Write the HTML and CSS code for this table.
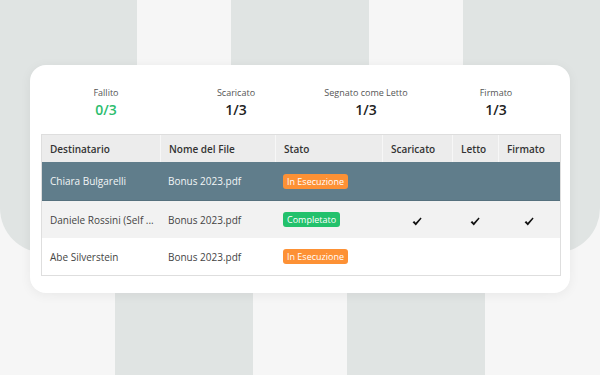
FILE: index.html
```html
<!DOCTYPE html>
<html lang="it">
<head>
<meta charset="utf-8">
<title>Stato documento</title>
<link rel="stylesheet" href="styles.css">
</head>
<body>
<div class="backdrop" aria-hidden="true">
  <div class="col col-top col-a"></div>
  <div class="col col-top col-b"></div>
  <div class="col col-top col-c"></div>
  <div class="col col-bottom col-d"></div>
  <div class="col col-bottom col-e"></div>
</div>
<main class="card">
  <section class="stats">
    <div class="stat"><div class="stat-label">Fallito</div><div class="stat-value ok">0/3</div></div>
    <div class="stat"><div class="stat-label">Scaricato</div><div class="stat-value">1/3</div></div>
    <div class="stat"><div class="stat-label">Segnato come Letto</div><div class="stat-value">1/3</div></div>
    <div class="stat"><div class="stat-label">Firmato</div><div class="stat-value">1/3</div></div>
  </section>
  <div class="table-wrap">
    <table class="grid">
      <colgroup>
        <col class="w-dest"><col class="w-file"><col class="w-stato"><col class="w-scar"><col class="w-letto"><col class="w-firm">
      </colgroup>
      <thead>
        <tr><th>Destinatario</th><th>Nome del File</th><th>Stato</th><th>Scaricato</th><th>Letto</th><th>Firmato</th></tr>
      </thead>
      <tbody>
        <tr class="selected">
          <td>Chiara Bulgarelli</td><td>Bonus 2023.pdf</td><td><span class="badge running">In Esecuzione</span></td><td></td><td></td><td></td>
        </tr>
        <tr class="alt">
          <td>Daniele Rossini (Self ...</td><td>Bonus 2023.pdf</td><td><span class="badge done">Completato</span></td>
          <td class="mark"><svg class="check" viewBox="0 0 10 9" width="10" height="9"><path d="M0.6 5.2 L2.2 3.9 L3.7 5.7 L8.6 0.6 L9.6 1.6 L3.8 8.4 Z"/></svg></td>
          <td class="mark"><svg class="check" viewBox="0 0 10 9" width="10" height="9"><path d="M0.6 5.2 L2.2 3.9 L3.7 5.7 L8.6 0.6 L9.6 1.6 L3.8 8.4 Z"/></svg></td>
          <td class="mark"><svg class="check" viewBox="0 0 10 9" width="10" height="9"><path d="M0.6 5.2 L2.2 3.9 L3.7 5.7 L8.6 0.6 L9.6 1.6 L3.8 8.4 Z"/></svg></td>
        </tr>
        <tr>
          <td>Abe Silverstein</td><td>Bonus 2023.pdf</td><td><span class="badge running">In Esecuzione</span></td><td></td><td></td><td></td>
        </tr>
      </tbody>
    </table>
  </div>
</main>
</body>
</html>
```

FILE: styles.css
```css
* { box-sizing: border-box; }
html, body {
  margin: 0;
  padding: 0;
}
body {
  width: 600px;
  height: 375px;
  overflow: hidden;
  position: relative;
  background: #f6f6f6;
  font-family: "Open Sans", "Noto Sans", sans-serif;
  color: #444;
  padding-top: 65px;
  padding-left: 30px;
}

.backdrop {
  position: absolute;
  inset: 0;
  z-index: 0;
}
.col {
  position: absolute;
  background: #e0e4e3;
}
.col-top { top: 0; height: 253px; }
.col-a { left: 0; width: 137px; border-bottom-left-radius: 45px; }
.col-b { left: 231px; width: 138px; }
.col-c { left: 463px; width: 137px; border-bottom-right-radius: 45px; }
.col-bottom { top: 280px; bottom: 0; border-radius: 6px 6px 0 0; }
.col-d { left: 115px; width: 138px; }
.col-e { left: 347px; width: 138px; }

.card {
  position: relative;
  z-index: 1;
  width: 540px;
  height: 228px;
  background: #fff;
  border-radius: 16px;
  box-shadow: 0 2px 12px rgba(0, 0, 0, 0.06);
  padding: 21px 9px 0 11px;
}

.stats {
  display: grid;
  grid-template-columns: repeat(4, 130px);
  width: 520px;
}
.stat {
  display: flex;
  flex-direction: column;
  align-items: center;
}
.stat-label {
  font-size: 9px;
  line-height: 13px;
  color: #555;
}
.stat-value {
  font-size: 14px;
  line-height: 20px;
  font-weight: 600;
  color: #222;
  margin-top: 1px;
}
.stat-value.ok { color: #2dbd6e; }

.table-wrap {
  margin-top: 14px;
  width: 520px;
  border: 1px solid #dedede;
}
.grid {
  width: 518px;
  border-collapse: separate;
  border-spacing: 0;
  table-layout: fixed;
  font-size: 10px;
}
.w-dest { width: 118px; }
.w-file { width: 115px; }
.w-stato { width: 107px; }
.w-scar { width: 70px; }
.w-letto { width: 46px; }
.w-firm { width: 62px; }

.grid th {
  height: 27px;
  background: #ececec;
  color: #333;
  font-weight: 600;
  text-align: left;
  padding: 0 0 0 8px;
  border-left: 1px solid #f7f7f7;
}
.grid th:first-child { border-left: 0; padding-left: 8px; }
.grid td {
  height: 37px;
  padding: 0 4px 0 8px;
  white-space: nowrap;
  overflow: hidden;
  color: #444;
  vertical-align: middle;
}
.grid tr.selected td {
  height: 39px;
  background: #607d8b;
  color: #f2f5f6;
  border-bottom: 1px solid #56717e;
}
.grid tr.alt td { background: #f2f2f2; }

.grid td.mark { text-align: center; padding: 0; }
.check { display: inline-block; vertical-align: middle; fill: #111; margin-top: 2px; }

.badge {
  display: inline-block;
  font-size: 9px;
  line-height: 11px;
  padding: 2px 4px 2px 4px;
  border-radius: 3px;
  color: #fff;
}
.badge.running { background: #fd9135; }
.badge.done { background: #23c16c; }
```
